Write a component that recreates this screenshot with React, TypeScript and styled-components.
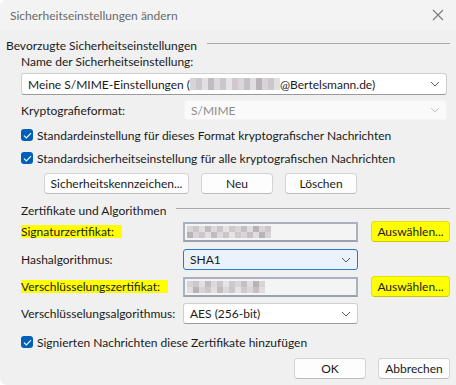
import styled, { createGlobalStyle } from "styled-components";

const GlobalStyle = createGlobalStyle`
  html, body {
    margin: 0;
    padding: 0;
    background: #ffffff;
  }
  * {
    box-sizing: border-box;
  }
`;

const Window = styled.div`
  width: 456px;
  height: 385px;
  background: #f0f0f0;
  font-family: Lato, "Noto Sans", sans-serif;
  font-size: 12px;
  color: #1a1a1a;
  border-radius: 7px 0 0 7px;
  overflow: hidden;
  display: flex;
  flex-direction: column;
`;

const TitleBar = styled.div`
  height: 30px;
  background: #f3f3f3;
  display: flex;
  align-items: center;
  justify-content: space-between;
  padding: 0 12px 0 10px;
  color: #6a6a6a;
`;

const CloseIcon = () => (
  <svg width="12" height="12" viewBox="0 0 12 12">
    <path d="M1 1 L11 11 M11 1 L1 11" stroke="#7a7a7a" strokeWidth="1.1" />
  </svg>
);

const Chevron = ({ color = "#5e5e5e" }: { color?: string }) => (
  <svg width="10" height="6" viewBox="0 0 10 6">
    <path d="M1 1 L5 5 L9 1" fill="none" stroke={color} strokeWidth="1" />
  </svg>
);

const Check = () => (
  <svg width="9" height="7" viewBox="0 0 9 7">
    <path d="M1 3.6 L3.4 6 L8 1.2" fill="none" stroke="#ffffff" strokeWidth="1.2" />
  </svg>
);

const MOSAIC = [
  "#d7d3d6", "#cfc8cc", "#e2dfe1", "#c6bfc4", "#dcd9dc", "#b9b3b8",
  "#e6e3e5", "#cdc7cb", "#d9d5d8", "#c2bcc1", "#e0dde0", "#cbc6ca",
];

const Mosaic = ({ cells, rows = 2 }: { cells: number; rows?: number }) => (
  <svg width={cells * 6} height={rows * 6}>
    {Array.from({ length: cells * rows }).map((_, i) => (
      <rect
        key={i}
        x={(i % cells) * 6}
        y={Math.floor(i / cells) * 6}
        width="6"
        height="6"
        fill={MOSAIC[(i * 7 + Math.floor(i / cells) * 3) % MOSAIC.length]}
      />
    ))}
  </svg>
);

const Body = styled.div`
  display: flex;
  flex-direction: column;
  padding: 0 6px 0 0;
`;

const GroupHeader = styled.div<{ $indent: number; $mt: number }>`
  display: flex;
  align-items: center;
  gap: 10px;
  height: 16px;
  margin-top: ${(p) => p.$mt}px;
  padding-left: ${(p) => p.$indent}px;
  &::after {
    content: "";
    flex: 1;
    height: 1px;
    background: #a8a8a8;
    margin-top: -3px;
  }
`;

const Label = styled.div<{ $mt?: number }>`
  height: 16px;
  line-height: 16px;
  margin-top: ${(p) => p.$mt ?? 0}px;
  padding-left: 21px;
`;

const Combo = styled.div<{ $focused?: boolean; $disabled?: boolean }>`
  height: ${(p) => (p.$disabled ? 20 : 21)}px;
  display: flex;
  align-items: center;
  justify-content: space-between;
  padding: 0 6px 0 6px;
  border-radius: 3px;
  background: ${(p) => (p.$focused ? "#eaf2fb" : p.$disabled ? "#fafafa" : "#ffffff")};
  border: 1px solid ${(p) => (p.$focused ? "#2f78c8" : p.$disabled ? "#f4f4f4" : "#cfcfcf")};
  border-bottom-color: ${(p) => (p.$focused ? "#2f78c8" : p.$disabled ? "#f4f4f4" : "#9a9a9a")};
  color: ${(p) => (p.$disabled ? "#8d8d8d" : "#1a1a1a")};
  white-space: nowrap;
`;

const WideCombo = styled(Combo)`
  height: 22px;
  margin: 3px 3px 0 21px;
`;

const FormRow = styled.div<{ $mt: number }>`
  display: grid;
  grid-template-columns: 162px 175px 1fr;
  align-items: center;
  height: 21px;
  margin-top: ${(p) => p.$mt}px;
  padding-left: 21px;
`;

const WideFormRow = styled(FormRow)`
  grid-template-columns: 163px 1fr;
  height: 20px;
  padding-right: 3px;
`;

const Marked = styled.span<{ $on?: boolean }>`
  justify-self: start;
  background: ${(p) => (p.$on ? "#ffff00" : "transparent")};
  padding: 0 ${(p) => (p.$on ? 8 : 0)}px 0 0;
  line-height: 13px;
`;

const CertField = styled.div`
  height: 20px;
  border: 2px solid #aab3bd;
  border-bottom-color: #9aa3ad;
  background: #f4f4f4;
  display: flex;
  align-items: center;
  padding-left: 2px;
  overflow: hidden;
`;

const CheckRow = styled.label<{ $mt: number }>`
  display: flex;
  align-items: center;
  gap: 4px;
  height: 16px;
  margin-top: ${(p) => p.$mt}px;
  padding-left: 21px;
`;

const Box = styled.span`
  width: 12px;
  height: 12px;
  border-radius: 3px;
  background: #005fb8;
  display: inline-flex;
  align-items: center;
  justify-content: center;
`;

const ButtonRow = styled.div<{ $mt: number; $pl: number; $justify?: string }>`
  display: flex;
  gap: 12px;
  height: 21px;
  margin-top: ${(p) => p.$mt}px;
  padding-left: ${(p) => p.$pl}px;
  justify-content: ${(p) => p.$justify ?? "flex-start"};
`;

const Button = styled.button<{ $w?: number; $yellow?: boolean }>`
  width: ${(p) => (p.$w ? `${p.$w}px` : "79px")};
  justify-self: end;
  height: 21px;
  padding: 0 4px;
  font: inherit;
  color: #1a1a1a;
  background: ${(p) => (p.$yellow ? "#ffff00" : "#fdfdfd")};
  border: 1px solid ${(p) => (p.$yellow ? "#e2e200" : "#d3d3d3")};
  border-bottom-color: ${(p) => (p.$yellow ? "#c8c800" : "#bdbdbd")};
  border-radius: 4px;
  white-space: nowrap;
`;

const Inline = styled.span`
  display: flex;
  align-items: center;
`;

export default function App() {
  return (
    <>
      <GlobalStyle />
      <Window>
        <TitleBar>
          <span>Sicherheitseinstellungen ändern</span>
          <CloseIcon />
        </TitleBar>
        <Body>
          <GroupHeader $indent={6} $mt={7}>
            Bevorzugte Sicherheitseinstellungen
          </GroupHeader>
          <Label $mt={1}>Name der Sicherheitseinstellung:</Label>
          <WideCombo>
            <Inline>
              Meine S/MIME-Einstellungen (
              <Mosaic cells={15} />
              @Bertelsmann.de)
            </Inline>
            <Chevron />
          </WideCombo>
          <WideFormRow $mt={5}>
            <span>Kryptografieformat:</span>
            <Combo $disabled>
              <span>S/MIME</span>
              <Chevron color="#c4c4c4" />
            </Combo>
          </WideFormRow>
          <CheckRow $mt={7}>
            <Box>
              <Check />
            </Box>
            Standardeinstellung für dieses Format kryptografischer Nachrichten
          </CheckRow>
          <CheckRow $mt={7}>
            <Box>
              <Check />
            </Box>
            Standardsicherheitseinstellung für alle kryptografischen Nachrichten
          </CheckRow>
          <ButtonRow $mt={7} $pl={44}>
            <Button $w={145}>Sicherheitskennzeichen...</Button>
            <Button $w={72}>Neu</Button>
            <Button $w={72}>Löschen</Button>
          </ButtonRow>
          <GroupHeader $indent={21} $mt={8}>
            Zertifikate und Algorithmen
          </GroupHeader>
          <FormRow $mt={3}>
            <Marked $on>Signaturzertifikat:</Marked>
            <CertField>
              <Mosaic cells={14} />
            </CertField>
            <Button $yellow>Auswählen...</Button>
          </FormRow>
          <FormRow $mt={7}>
            <Marked>Hashalgorithmus:</Marked>
            <Combo $focused>
              <span>SHA1</span>
              <Chevron />
            </Combo>
          </FormRow>
          <FormRow $mt={6}>
            <Marked $on>Verschlüsselungszertifikat:</Marked>
            <CertField>
              <Mosaic cells={13} />
            </CertField>
            <Button $yellow>Auswählen...</Button>
          </FormRow>
          <FormRow $mt={6}>
            <Marked>Verschlüsselungsalgorithmus:</Marked>
            <Combo>
              <span>AES (256-bit)</span>
              <Chevron />
            </Combo>
          </FormRow>
          <CheckRow $mt={10}>
            <Box>
              <Check />
            </Box>
            Signierten Nachrichten diese Zertifikate hinzufügen
          </CheckRow>
          <ButtonRow $mt={8} $pl={0} $justify="flex-end">
            <Button $w={72}>OK</Button>
            <Button $w={72}>Abbrechen</Button>
          </ButtonRow>
        </Body>
      </Window>
    </>
  );
}
